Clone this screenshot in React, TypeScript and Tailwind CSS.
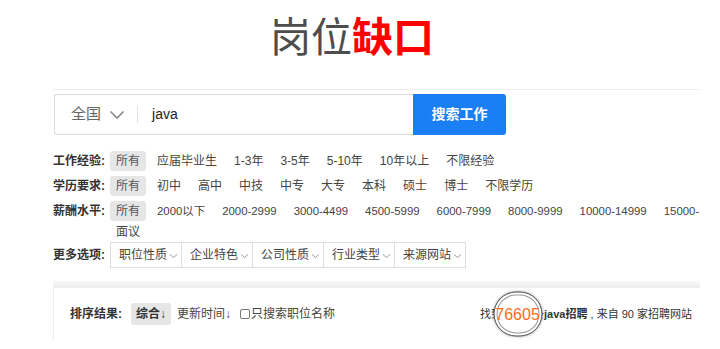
import React from 'react';

const FONT = '"Liberation Sans", "Noto Sans CJK SC", sans-serif';

const experience = ['应届毕业生', '1-3年', '3-5年', '5-10年', '10年以上', '不限经验'];
const education = ['初中', '高中', '中技', '中专', '大专', '本科', '硕士', '博士', '不限学历'];
const salary = ['2000以下', '2000-2999', '3000-4499', '4500-5999', '6000-7999', '8000-9999', '10000-14999', '15000-'];
const more = ['职位性质', '企业特色', '公司性质', '行业类型', '来源网站'];

function Chevron() {
    return (
        <svg className="w-[9px] h-[6px] ml-[2px] mt-[5px]" viewBox="0 0 9 6" fill="none" stroke="#999" strokeWidth="1">
            <path d="M1 1.5l3.5 3 3.5-3" />
        </svg>
    );
}

function FilterRow({ label, items, extra, last, small }: { label: string; items: string[]; extra?: string; last?: boolean; small?: boolean }) {
    return (
        <div className={`flex items-start ${last ? '' : 'mb-[5px]'}`}>
            <div className="w-[57px] h-[20px] leading-[20px] text-[12px] font-bold text-[#333] shrink-0">{label}</div>
            <div className="flex-1 min-w-0 overflow-hidden">
                <div className="flex flex-nowrap gap-x-[5px]">
                    <span className="h-[20px] leading-[20px] px-[6px] rounded-[3px] bg-[#e6e6e6] text-[12px] text-[#555] shrink-0">所有</span>
                    {items.map((it) => (
                        <span key={it} className={`h-[20px] leading-[20px] px-[6px] ${small ? 'text-[11.4px]' : 'text-[12px]'} text-[#444] whitespace-nowrap shrink-0`}>{it}</span>
                    ))}
                </div>
                {extra && (
                    <div className="h-[20px] leading-[20px] px-[6px] mt-px text-[12px] text-[#444]">{extra}</div>
                )}
            </div>
        </div>
    );
}

export default function App() {
    return (
        <div className="w-[720px] h-[349px] bg-white overflow-hidden" style={{ fontFamily: FONT }}>
            {/* Title */}
            <div className="pt-[18px] h-[58px] pr-[16px] text-center text-[41px] leading-[40px]">
                <span className="text-[#4d4d4d]">岗位</span>
                <span className="text-[#ff0000] font-bold">缺口</span>
            </div>

            <div className="ml-[53px] w-[647px] mt-[31px] border-t border-[#efefef]">
                {/* Search bar */}
                <div className="flex mt-[4px] h-[41px]">
                    <div className="ml-px w-[359px] flex items-center border border-[#dcdcdc] border-r-0 rounded-l-[3px] bg-white">
                        <span className="ml-[16px] text-[15px] text-[#666]">全国</span>
                        <svg className="ml-[8px] w-[16px] h-[10px]" viewBox="0 0 16 10" fill="none" stroke="#888" strokeWidth="1.6">
                            <path d="M1.5 1.5l6.5 6.5 6.5-6.5" />
                        </svg>
                        <span className="ml-[12px] w-px h-[17px] bg-[#e0e0e0]" />
                        <span className="ml-[14px] text-[14px] text-[#222]">java</span>
                    </div>
                    <button className="w-[93px] h-[41px] bg-[#1a7ef5] rounded-r-[3px] text-white text-[14px] font-bold">搜索工作</button>
                </div>

                {/* Filters */}
                <div className="mt-[16px]">
                    <FilterRow label="工作经验:" items={experience} />
                    <FilterRow label="学历要求:" items={education} />
                    <FilterRow label="薪酬水平:" items={salary} extra="面议" last small />
                    <div className="flex items-center">
                        <div className="w-[57px] text-[12px] font-bold text-[#333] shrink-0">更多选项:</div>
                        <div className="flex">
                            {more.map((m, i) => (
                                <div key={m} className={`w-[72px] h-[26px] flex items-start pt-[5px] pl-[8px] border border-[#ddd] text-[12px] text-[#444] ${i > 0 ? '-ml-px' : ''}`}>
                                    <span className="leading-[14px]">{m}</span>
                                    <Chevron />
                                </div>
                            ))}
                        </div>
                    </div>
                </div>

                {/* Gray separator */}
                <div className="mt-[13px] h-[7px] bg-gradient-to-b from-[#f7f7f7] to-[#eeeeee]" />

                {/* Sort + result count */}
                <div className="h-[52px] border-l border-[#eeeeee] flex items-center pl-[16px] pr-[8px] text-[12px]">
                    <span className="font-bold text-[#333]">排序结果:</span>
                    <span className="ml-[9px] h-[22px] leading-[22px] px-[5px] rounded-[3px] bg-[#e6e6e6] font-bold text-[#333]">综合↓</span>
                    <span className="ml-[6px] text-[#444]">更新时间↓</span>
                    <span className="ml-[9px] w-[10px] h-[10px] border border-[#777] rounded-[2px]" />
                    <span className="ml-px text-[#444]">只搜索职位名称</span>

                    <div className="ml-auto flex items-center text-[11px] text-[#333] whitespace-pre">
                        <span>找到</span>
                        {/* slot for the count, shown enlarged in a magnifier lens */}
                        <span className="relative w-[31px] h-[14px]">
                            <span className="absolute left-1/2 top-1/2 -translate-x-1/2 -translate-y-1/2 w-[49px] h-[45px] rounded-full bg-white border-[1.5px] border-[#555] shadow-[inset_0_0_0_2px_#fff,inset_0_0_0_3px_#999,0_0_3px_rgba(0,0,0,0.35)] flex items-center justify-center">
                                <span className="text-[16px] leading-none text-[#ff6a1a]">76605</span>
                            </span>
                        </span>
                        <span>条</span>
                        <span className="font-bold">java招聘</span>
                        <span> , 来自 90 家招聘网站</span>
                    </div>
                </div>
            </div>
        </div>
    );
}
